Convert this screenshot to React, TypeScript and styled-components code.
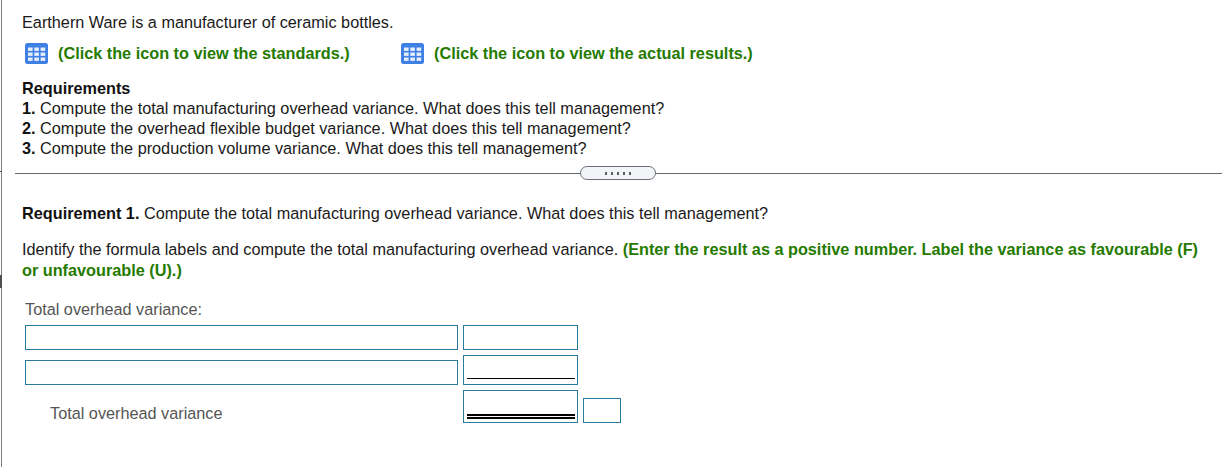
import React from "react";
import styled, { createGlobalStyle } from "styled-components";

const Global = createGlobalStyle`
  html, body { margin: 0; padding: 0; background: #fff; }
  body { font-family: "Liberation Sans", Arial, sans-serif; font-size: 16.25px; color: #1a1a1a; }
`;

const Page = styled.div`
  position: relative;
  width: 1230px;
  height: 467px;
  box-sizing: border-box;
  margin-left: 1px;
  border-left: 1px solid #808080;
  padding-top: 12px;
  overflow: hidden;
`;

const EdgeMark = styled.div<{ $top: number; $height: number }>`
  position: fixed;
  left: 0;
  top: ${(p) => p.$top}px;
  width: 2px;
  height: ${(p) => p.$height}px;
  background: #4f4f4f;
`;

const Section = styled.div`
  padding-left: 20px;
`;

const Line = styled.div`
  line-height: 20px;
  white-space: nowrap;
`;

const IconRow = styled.div`
  display: flex;
  align-items: center;
  height: 22px;
  margin-top: 10px;
  margin-bottom: 14px;
`;

const IconLink = styled.div<{ $width: number }>`
  display: flex;
  align-items: center;
  gap: 10px;
  width: ${(p) => p.$width}px;
  padding-left: 3px;
  box-sizing: border-box;
`;

const Green = styled.span`
  color: #257a00;
  font-weight: 700;
`;

const Strong = styled.b`
  font-weight: 700;
  color: #111;
`;

const DividerRow = styled.div`
  display: flex;
  align-items: center;
  height: 14px;
  margin: 8px 0 0 13px;
  width: 1207px;
`;

const RuleStart = styled.div`
  height: 1px;
  width: 565px;
  background: #666b72;
`;

const RuleEnd = styled.div`
  height: 1px;
  flex: 1;
  background: #666b72;
`;

const Pill = styled.div`
  width: 76px;
  height: 14px;
  box-sizing: border-box;
  border: 1px solid #6b7078;
  border-radius: 7px;
  background: #f2f4f7;
  display: flex;
  align-items: center;
  justify-content: center;
  gap: 4px;
`;

const Dot = styled.i`
  width: 2px;
  height: 3px;
  background: #5a5f66;
  display: block;
`;

const Answer = styled(Section)`
  margin-top: 23px;
`;

const Para = styled.div`
  margin-top: 16px;
  line-height: 21px;
  height: 42px;
  width: 1180px;
`;

const FormTitle = styled.div`
  margin: 18px 0 6px 3px;
  line-height: 20px;
  color: #555;
`;

const Form = styled.div`
  display: grid;
  grid-template-columns: 433px 115px 38px;
  column-gap: 5px;
  row-gap: 5px;
  margin-left: 3px;
  align-items: end;
`;

const TextBox = styled.div<{ $height?: number }>`
  position: relative;
  box-sizing: border-box;
  height: ${(p) => p.$height ?? 25}px;
  border: 1px solid #2a7a9e;
  background: #fff;
`;

const LabelBox = styled(TextBox)`
  margin-top: 5px;
`;

const Underline = styled.div`
  position: absolute;
  left: 3px;
  right: 2px;
  bottom: 5px;
  border-bottom: 1px solid #000;
`;

const DoubleUnderline = styled.div`
  position: absolute;
  left: 3px;
  right: 2px;
  bottom: 3px;
  height: 1px;
  border-top: 2px solid #000;
  border-bottom: 2px solid #000;
`;

const TotalLabel = styled.div`
  padding-left: 25px;
  line-height: 20px;
  color: #555;
`;

const Sheet = () => (
  <svg width="23" height="21" viewBox="0 0 23 21" aria-hidden="true">
    <rect x="0" y="0" width="23" height="21" rx="2.5" fill="#3f80e4" />
    {[4.5, 9.5, 14.5].map((y) =>
      [3, 9.3, 15.6].map((x) => (
        <rect key={`${x}-${y}`} x={x} y={y} width="4.6" height="3.4" fill="#e6eefc" />
      ))
    )}
  </svg>
);

export default function App() {
  return (
    <Page>
      <Global />
      <EdgeMark $top={171} $height={1} />
      <EdgeMark $top={275} $height={13} />
      <Section>
        <Line>Earthern Ware is a manufacturer of ceramic bottles.</Line>
        <IconRow>
          <IconLink $width={376}>
            <Sheet />
            <Green>(Click the icon to view the standards.)</Green>
          </IconLink>
          <IconLink $width={400}>
            <Sheet />
            <Green>(Click the icon to view the actual results.)</Green>
          </IconLink>
        </IconRow>
        <Line><Strong>Requirements</Strong></Line>
        <Line><Strong>1.</Strong> Compute the total manufacturing overhead variance. What does this tell management?</Line>
        <Line><Strong>2.</Strong> Compute the overhead flexible budget variance. What does this tell management?</Line>
        <Line><Strong>3.</Strong> Compute the production volume variance. What does this tell management?</Line>
      </Section>
      <DividerRow>
        <RuleStart />
        <Pill>
          <Dot /><Dot /><Dot /><Dot /><Dot />
        </Pill>
        <RuleEnd />
      </DividerRow>
      <Answer>
        <Line><Strong>Requirement 1.</Strong> Compute the total manufacturing overhead variance. What does this tell management?</Line>
        <Para>
          Identify the formula labels and compute the total manufacturing overhead variance.{" "}
          <Green>(Enter the result as a positive number. Label the variance as favourable (F) or unfavourable (U).)</Green>
        </Para>
        <FormTitle>Total overhead variance:</FormTitle>
        <Form>
          <TextBox />
          <TextBox />
          <span />
          <LabelBox />
          <TextBox $height={30}><Underline /></TextBox>
          <span />
          <TotalLabel>Total overhead variance</TotalLabel>
          <TextBox $height={33}><DoubleUnderline /></TextBox>
          <TextBox />
        </Form>
      </Answer>
    </Page>
  );
}
